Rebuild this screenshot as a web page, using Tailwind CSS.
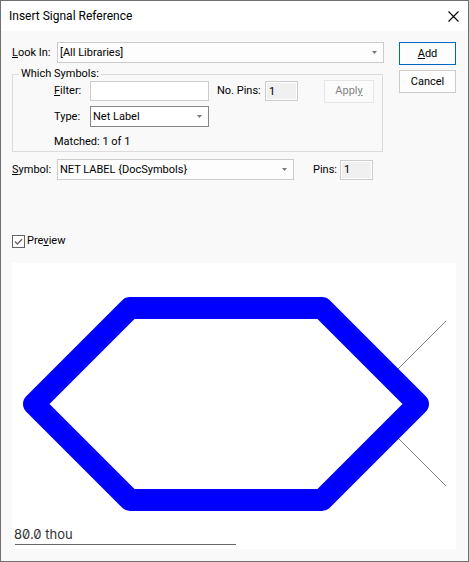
<!DOCTYPE html>
<html lang="en">

<head>
    <meta charset="UTF-8">
    <meta name="viewport" content="width=device-width, initial-scale=1.0">
    <title>Insert Signal Reference</title>
    <script src="https://cdn.jsdelivr.net/npm/@tailwindcss/browser@4"></script>
</head>

<body class="font-[Roboto,sans-serif] text-[11px] leading-[16px] text-black">
    <div class="flex min-h-screen flex-col border border-[#707070] bg-[#f9f9f9]">
        <!-- Title bar -->
        <header class="flex h-[30px] items-center justify-between bg-white pl-2 pr-2">
            <h1 class="text-[12px]">Insert Signal Reference</h1>
            <button type="button" aria-label="Close" class="p-px">
                <svg class="h-[11px] w-[11px]" viewBox="0 0 11 11" fill="none" stroke="#000" stroke-width="1.1">
                    <path d="M0.5 0.5 L10.5 10.5 M10.5 0.5 L0.5 10.5" />
                </svg>
            </button>
        </header>

        <main class="pt-[11px] pr-3 pb-3 pl-[11px]">
            <div class="flex gap-[15px]">
                <!-- Search settings -->
                <div class="flex-1">
                    <div class="flex items-center">
                        <label for="lookIn" class="w-[45px]"><u>L</u>ook In:</label>
                        <div class="relative flex-1">
                            <select id="lookIn" class="block h-[21px] w-full appearance-none border border-[#cccccc] bg-[#fdfdfd] pl-[2px] leading-[16px]">
                                <option>[All Libraries]</option>
                            </select>
                            <svg class="pointer-events-none absolute top-[9px] right-[7px] h-[3px] w-[5px]" viewBox="0 0 5 3" fill="#777"><path d="M0 0h5L2.5 3z" /></svg>
                        </div>
                    </div>

                    <fieldset class="mt-1 mr-px border border-[#dcdcdc] pl-[41px]">
                        <legend class="-ml-[35px] px-[2px] leading-[14px]">Which Symbols:</legend>
                        <div class="flex h-5 items-center">
                            <label for="filter" class="w-9"><u>F</u>ilter:</label>
                            <input id="filter" type="text" class="h-5 w-[119px] border border-[#cccccc] bg-white px-[3px]">
                            <label for="filterPins" class="ml-2 w-12 whitespace-nowrap">No. Pins:</label>
                            <input id="filterPins" type="text" value="1" readonly class="h-5 w-[33px] border border-[#cccccc] bg-[#f0f0f0] px-[3px] shadow-[inset_0_0_0_1px_#fff]">
                            <button type="button" disabled class="mr-2 ml-auto h-[23px] w-[50px] border border-[#e6e6e6] bg-[#fbfbfb] text-[#838383]">Appl<u>y</u></button>
                        </div>
                        <div class="mt-[5px] flex items-center">
                            <label for="type" class="w-9">Type:</label>
                            <div class="relative w-[119px]">
                                <select id="type" class="block h-[21px] w-full appearance-none border border-[#868686] bg-white pl-[2px] leading-[16px]">
                                    <option>Net Label</option>
                                </select>
                                <svg class="pointer-events-none absolute top-[9px] right-[7px] h-[3px] w-[5px]" viewBox="0 0 5 3" fill="#777"><path d="M0 0h5L2.5 3z" /></svg>
                            </div>
                        </div>
                        <p class="mt-[7px] mb-px">Matched: 1 of 1</p>
                    </fieldset>

                    <div class="mt-[7px] flex items-center">
                        <label for="symbol" class="w-[45px]"><u>S</u>ymbol:</label>
                        <div class="relative flex-1">
                            <select id="symbol" class="block h-[21px] w-full appearance-none border border-[#cccccc] bg-[#fdfdfd] pl-[2px] leading-[16px]">
                                <option>NET LABEL {DocSymbols}</option>
                            </select>
                            <svg class="pointer-events-none absolute top-[9px] right-[7px] h-[3px] w-[5px]" viewBox="0 0 5 3" fill="#777"><path d="M0 0h5L2.5 3z" /></svg>
                        </div>
                        <label for="symbolPins" class="ml-[19px] w-[27px]">Pins:</label>
                        <input id="symbolPins" type="text" value="1" readonly class="mr-[11px] h-5 w-[33px] border border-[#cccccc] bg-[#f0f0f0] px-[3px] shadow-[inset_0_0_0_1px_#fff]">
                    </div>
                </div>

                <!-- Dialog buttons -->
                <div class="flex w-[57px] flex-col gap-[5px]">
                    <button type="button" class="h-[23px] border border-[#0067c0] bg-[#fdfdfd]"><u>A</u>dd</button>
                    <button type="button" class="h-[23px] border border-[#cccccc] bg-[#fdfdfd]">Cancel</button>
                </div>
            </div>

            <div class="mt-[53px] flex items-center gap-[2px]">
                <span class="relative h-[13px] w-[13px]">
                    <input id="preview" type="checkbox" checked class="block h-[13px] w-[13px] appearance-none border border-[#626262] bg-white">
                    <svg class="pointer-events-none absolute inset-0 h-[13px] w-[13px]" viewBox="0 0 13 13" fill="none" stroke="#666" stroke-width="1.4"><path d="M3 6.5l2.3 2.4L10 4.2" /></svg>
                </span>
                <label for="preview">Pre<u>v</u>iew</label>
            </div>

            <!-- Symbol preview -->
            <svg class="mt-[14px] block w-full bg-white" viewBox="0 0 444 286" fill="none">
                <path d="M386 106L434 58M386 175L434 223" stroke="#808080" />
                <path d="M22 141L118 45H310L406 141L310 237H118Z" stroke="#0000ff" stroke-width="22" stroke-linejoin="round" />
                <text x="2" y="276" class="fill-[#333] font-[Inter,sans-serif] text-[13px] [font-feature-settings:'zero']">80.0 thou</text>
                <path d="M3 281.5H224" stroke="#666" />
            </svg>
        </main>
    </div>
</body>

</html>
